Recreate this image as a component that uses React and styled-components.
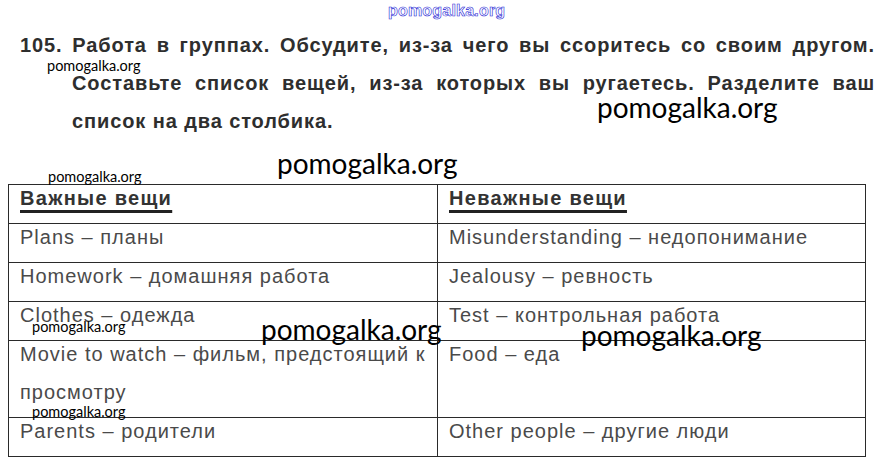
import React from 'react'
import styled, { createGlobalStyle } from 'styled-components'

const GlobalStyle = createGlobalStyle`
    body {
        margin: 0;
        background: #fff;
    }
`

const Page = styled.div`
    position: relative;
    width: 888px;
    height: 465px;
    overflow: hidden;
    background: #fff;
`

const Task = styled.div`
    padding: 26px 13px 0 20px;
    font-family: "Liberation Sans", Arial, sans-serif;
    font-weight: 700;
    font-size: 20px;
    line-height: 38px;
    letter-spacing: 0.9px;
    color: #2e2e2e;
`

const TaskLine = styled.div`
    padding-left: ${props => props.indent ? '52px' : '0'};
    text-align: ${props => props.last ? 'left' : 'justify'};
    text-align-last: ${props => props.last ? 'left' : 'justify'};
    white-space: nowrap;
`

const Table = styled.table`
    margin: 44px 0 0 8px;
    width: 858px;
    border-collapse: collapse;
    table-layout: fixed;
    font-family: "Liberation Sans", Arial, sans-serif;
    font-size: 20px;
    letter-spacing: 1px;
`

const Cell = styled.td`
    border: 1px solid #2a2a2a;
    padding: 0 8px 0 11px;
    vertical-align: top;
    line-height: 38px;
    color: ${props => props.head ? '#333' : '#4a4a4a'};
    font-weight: ${props => props.head ? 700 : 400};
    width: ${props => props.wide ? '409px' : 'auto'};
    white-space: nowrap;
`

const CellText = styled.div`
    margin: -6px 0 6px;
`

const HeadText = styled.span`
    letter-spacing: 1.3px;
    text-decoration: underline;
    text-decoration-thickness: 3px;
    text-underline-offset: 5px;
    text-decoration-color: #222;
`

const Watermark = styled.span`
    position: absolute;
    top: ${props => props.top}px;
    left: ${props => props.left}px;
    font-family: Lato, "Open Sans", sans-serif;
    font-size: ${props => props.big ? '28px' : '14.5px'};
    line-height: 1;
    color: #000;
    white-space: nowrap;
    pointer-events: none;
`

const OutlineMark = styled.span`
    position: absolute;
    top: 3px;
    left: 388px;
    font-family: "Liberation Sans", Arial, sans-serif;
    font-size: 16px;
    font-weight: 700;
    letter-spacing: 0.2px;
    line-height: 1;
    color: #fff;
    -webkit-text-stroke: 0.6px #2a2ad6;
`

const rows = [
    ['Plans – планы', 'Misunderstanding – недопонимание'],
    ['Homework – домашняя работа', 'Jealousy – ревность'],
    ['Clothes – одежда', 'Test – контрольная работа'],
    [<>Movie to watch – фильм, предстоящий к<br />просмотру</>, 'Food – еда'],
    ['Parents – родители', 'Other people – другие люди'],
]

const marks = [
    { top: 59, left: 47 },
    { top: 93, left: 597, big: true },
    { top: 149, left: 277, big: true },
    { top: 170, left: 48 },
    { top: 320, left: 32 },
    { top: 315, left: 261, big: true },
    { top: 321, left: 581, big: true },
    { top: 405, left: 32 },
]

const App = () => (
    <Page>
        <GlobalStyle />
        <OutlineMark>pomogalka.org</OutlineMark>
        <Task>
            <TaskLine>105. Работа в группах. Обсудите, из-за чего вы ссоритесь со своим другом.</TaskLine>
            <TaskLine indent>Составьте список вещей, из-за которых вы ругаетесь. Разделите ваш</TaskLine>
            <TaskLine indent last>список на два столбика.</TaskLine>
        </Task>
        <Table>
            <tbody>
                <tr>
                    <Cell head wide><CellText><HeadText>Важные вещи</HeadText></CellText></Cell>
                    <Cell head><CellText><HeadText>Неважные вещи</HeadText></CellText></Cell>
                </tr>
                {rows.map((row, i) => (
                    <tr key={i}>
                        <Cell wide><CellText>{row[0]}</CellText></Cell>
                        <Cell><CellText>{row[1]}</CellText></Cell>
                    </tr>
                ))}
            </tbody>
        </Table>
        {marks.map((m, i) => (
            <Watermark key={i} top={m.top} left={m.left} big={m.big}>pomogalka.org</Watermark>
        ))}
    </Page>
)

export default App
